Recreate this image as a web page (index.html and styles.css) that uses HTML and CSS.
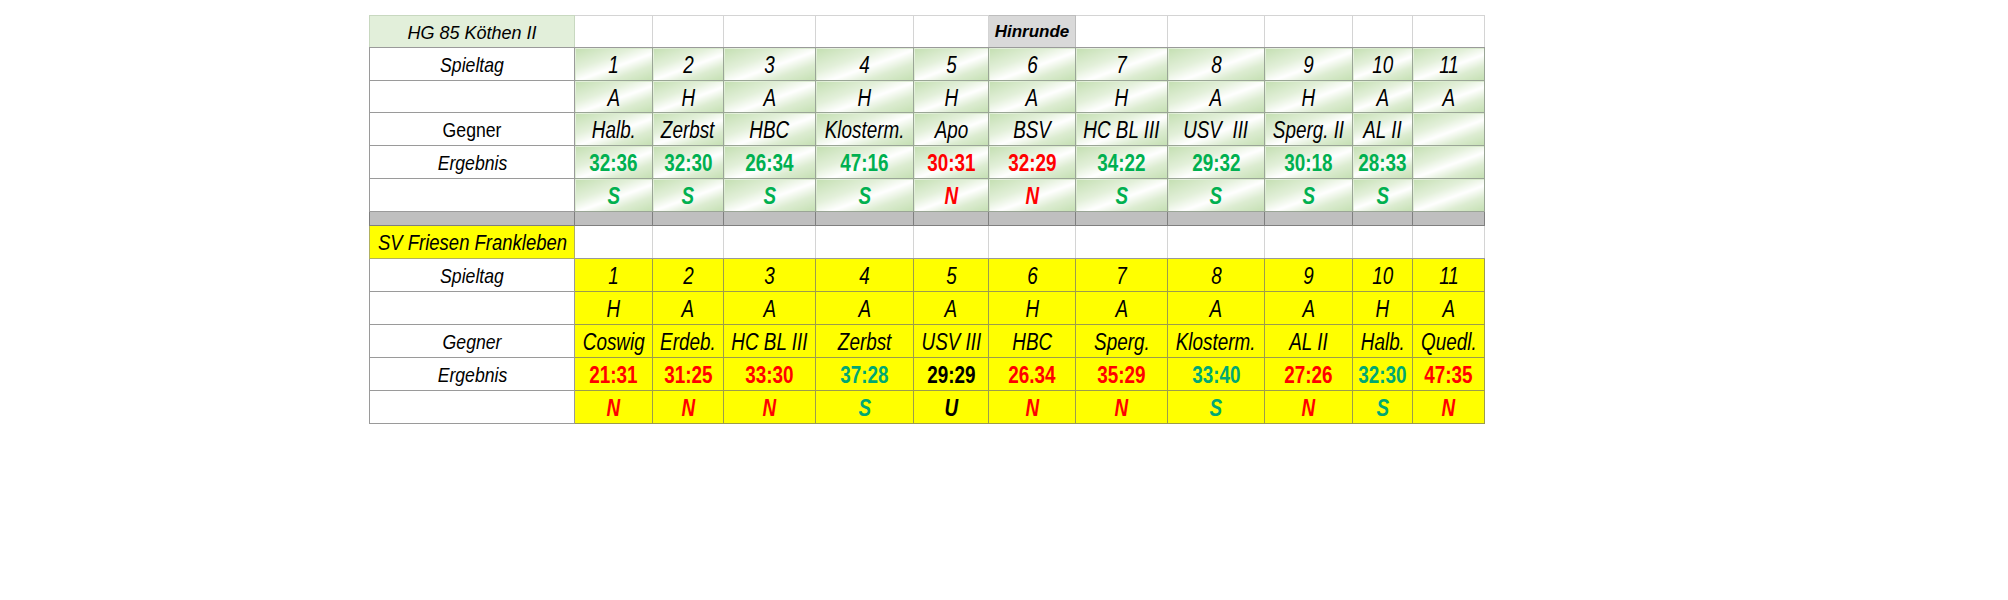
FILE: index.html
```html
<!DOCTYPE html>
<html lang="de">
<head>
<meta charset="utf-8">
<title>Spielplan</title>
<link rel="stylesheet" href="styles.css">
</head>
<body>
<table class="plan">
  <colgroup>
    <col class="c-label">
    <col class="c1"><col class="c2"><col class="c3"><col class="c4"><col class="c5"><col class="c6">
    <col class="c7"><col class="c8"><col class="c9"><col class="c10"><col class="c11">
  </colgroup>
  <tbody>
    <tr class="r-a">
      <td class="title-green"><span class="t-hg">HG 85 Köthen II</span></td>
      <td class="blank"></td><td class="blank"></td><td class="blank"></td><td class="blank"></td><td class="blank"></td>
      <td class="hinrunde"><span>Hinrunde</span></td>
      <td class="blank"></td><td class="blank"></td><td class="blank"></td><td class="blank"></td><td class="blank"></td>
    </tr>
    <tr class="r-b">
      <td class="label"><span class="sq">Spieltag</span></td>
      <td class="g"><span class="sq">1</span></td><td class="g"><span class="sq">2</span></td><td class="g"><span class="sq">3</span></td><td class="g"><span class="sq">4</span></td><td class="g"><span class="sq">5</span></td><td class="g"><span class="sq">6</span></td><td class="g"><span class="sq">7</span></td><td class="g"><span class="sq">8</span></td><td class="g"><span class="sq">9</span></td><td class="g"><span class="sq">10</span></td><td class="g"><span class="sq">11</span></td>
    </tr>
    <tr class="r-a">
      <td class="label"></td>
      <td class="g"><span class="sq">A</span></td><td class="g"><span class="sq">H</span></td><td class="g"><span class="sq">A</span></td><td class="g"><span class="sq">H</span></td><td class="g"><span class="sq">H</span></td><td class="g"><span class="sq">A</span></td><td class="g"><span class="sq">H</span></td><td class="g"><span class="sq">A</span></td><td class="g"><span class="sq">H</span></td><td class="g"><span class="sq">A</span></td><td class="g"><span class="sq">A</span></td>
    </tr>
    <tr class="r-b">
      <td class="label upright"><span class="sq">Gegner</span></td>
      <td class="g"><span class="sq">Halb.</span></td><td class="g"><span class="sq">Zerbst</span></td><td class="g"><span class="sq">HBC</span></td><td class="g"><span class="sq">Klosterm.</span></td><td class="g"><span class="sq">Apo</span></td><td class="g"><span class="sq">BSV</span></td><td class="g"><span class="sq">HC BL III</span></td><td class="g"><span class="sq">USV&nbsp; III</span></td><td class="g"><span class="sq">Sperg. II</span></td><td class="g"><span class="sq">AL II</span></td><td class="g"></td>
    </tr>
    <tr class="r-b">
      <td class="label"><span class="sq">Ergebnis</span></td>
      <td class="g res win"><span class="sq">32:36</span></td><td class="g res win"><span class="sq">32:30</span></td><td class="g res win"><span class="sq">26:34</span></td><td class="g res win"><span class="sq">47:16</span></td><td class="g res loss"><span class="sq">30:31</span></td><td class="g res loss"><span class="sq">32:29</span></td><td class="g res win"><span class="sq">34:22</span></td><td class="g res win"><span class="sq">29:32</span></td><td class="g res win"><span class="sq">30:18</span></td><td class="g res win"><span class="sq">28:33</span></td><td class="g"></td>
    </tr>
    <tr class="r-b">
      <td class="label"></td>
      <td class="g out win"><span class="sq">S</span></td><td class="g out win"><span class="sq">S</span></td><td class="g out win"><span class="sq">S</span></td><td class="g out win"><span class="sq">S</span></td><td class="g out loss"><span class="sq">N</span></td><td class="g out loss"><span class="sq">N</span></td><td class="g out win"><span class="sq">S</span></td><td class="g out win"><span class="sq">S</span></td><td class="g out win"><span class="sq">S</span></td><td class="g out win"><span class="sq">S</span></td><td class="g"></td>
    </tr>
    <tr class="r-sep">
      <td></td><td></td><td></td><td></td><td></td><td></td><td></td><td></td><td></td><td></td><td></td><td></td>
    </tr>
    <tr class="r-b">
      <td class="title-yellow"><span class="sq t-sv">SV Friesen Frankleben</span></td>
      <td class="blank"></td><td class="blank"></td><td class="blank"></td><td class="blank"></td><td class="blank"></td><td class="blank"></td>
      <td class="blank"></td><td class="blank"></td><td class="blank"></td><td class="blank"></td><td class="blank"></td>
    </tr>
    <tr class="r-b">
      <td class="label"><span class="sq">Spieltag</span></td>
      <td class="y"><span class="sq">1</span></td><td class="y"><span class="sq">2</span></td><td class="y"><span class="sq">3</span></td><td class="y"><span class="sq">4</span></td><td class="y"><span class="sq">5</span></td><td class="y"><span class="sq">6</span></td><td class="y"><span class="sq">7</span></td><td class="y"><span class="sq">8</span></td><td class="y"><span class="sq">9</span></td><td class="y"><span class="sq">10</span></td><td class="y"><span class="sq">11</span></td>
    </tr>
    <tr class="r-b">
      <td class="label"></td>
      <td class="y"><span class="sq">H</span></td><td class="y"><span class="sq">A</span></td><td class="y"><span class="sq">A</span></td><td class="y"><span class="sq">A</span></td><td class="y"><span class="sq">A</span></td><td class="y"><span class="sq">H</span></td><td class="y"><span class="sq">A</span></td><td class="y"><span class="sq">A</span></td><td class="y"><span class="sq">A</span></td><td class="y"><span class="sq">H</span></td><td class="y"><span class="sq">A</span></td>
    </tr>
    <tr class="r-b">
      <td class="label"><span class="sq">Gegner</span></td>
      <td class="y"><span class="sq">Coswig</span></td><td class="y"><span class="sq">Erdeb.</span></td><td class="y"><span class="sq">HC BL III</span></td><td class="y"><span class="sq">Zerbst</span></td><td class="y"><span class="sq">USV III</span></td><td class="y"><span class="sq">HBC</span></td><td class="y"><span class="sq">Sperg.</span></td><td class="y"><span class="sq">Klosterm.</span></td><td class="y"><span class="sq">AL II</span></td><td class="y"><span class="sq">Halb.</span></td><td class="y"><span class="sq">Quedl.</span></td>
    </tr>
    <tr class="r-b">
      <td class="label"><span class="sq">Ergebnis</span></td>
      <td class="y res loss"><span class="sq">21:31</span></td><td class="y res loss"><span class="sq">31:25</span></td><td class="y res loss"><span class="sq">33:30</span></td><td class="y res win2"><span class="sq">37:28</span></td><td class="y res draw"><span class="sq">29:29</span></td><td class="y res loss"><span class="sq">26.34</span></td><td class="y res loss"><span class="sq">35:29</span></td><td class="y res win2"><span class="sq">33:40</span></td><td class="y res loss"><span class="sq">27:26</span></td><td class="y res win2"><span class="sq">32:30</span></td><td class="y res loss"><span class="sq">47:35</span></td>
    </tr>
    <tr class="r-b">
      <td class="label"></td>
      <td class="y out loss"><span class="sq">N</span></td><td class="y out loss"><span class="sq">N</span></td><td class="y out loss"><span class="sq">N</span></td><td class="y out win2"><span class="sq">S</span></td><td class="y out draw"><span class="sq">U</span></td><td class="y out loss"><span class="sq">N</span></td><td class="y out loss"><span class="sq">N</span></td><td class="y out win2"><span class="sq">S</span></td><td class="y out loss"><span class="sq">N</span></td><td class="y out win2"><span class="sq">S</span></td><td class="y out loss"><span class="sq">N</span></td>
    </tr>
  </tbody>
</table>
</body>
</html>
```

FILE: styles.css
```css
html, body {
  margin: 0;
  padding: 0;
  background: #ffffff;
}

body {
  padding: 15px 0 0 369px;
  font-family: "Liberation Sans", Arial, sans-serif;
  color: #000;
}

.plan {
  border-collapse: collapse;
  table-layout: fixed;
  width: 1115px;
}

.c-label { width: 205px; }
.c1 { width: 78px; }
.c2 { width: 71px; }
.c3 { width: 92px; }
.c4 { width: 98px; }
.c5 { width: 75px; }
.c6 { width: 87px; }
.c7 { width: 92px; }
.c8 { width: 97px; }
.c9 { width: 88px; }
.c10 { width: 60px; }
.c11 { width: 72px; }

.plan td {
  padding: 0;
  border: 1px solid #9a9a9a;
  text-align: center;
  vertical-align: middle;
  font-style: italic;
  font-size: 23px;
  line-height: 24px;
  white-space: nowrap;
  overflow: visible;
}

.r-a td { height: 31px; }
.r-b td { height: 32px; }
.r-sep td {
  height: 13px;
  background: #bfbfbf;
  border-color: #7f7f7f;
}

.sq {
  display: inline-block;
  transform: scaleX(0.82);
  transform-origin: center;
  padding-top: 2px;
  margin: 0 -20px;
}

.label {
  background: #ffffff;
  font-size: 21px !important;
}
.label .sq { transform: scaleX(0.84); }
.label.upright { font-style: normal !important; }

.blank {
  background: #ffffff;
  border-color: #d4d4d4 !important;
  border-bottom-color: #9a9a9a !important;
}

.title-green {
  background: #e2efda;
  border-color: #c8d8c0 !important;
  border-bottom-color: #9a9a9a !important;
}
.t-hg {
  font-size: 18px;
}

.title-yellow {
  background: #ffff00;
  border-color: #b0b060 !important;
}
.title-yellow .t-sv {
  font-size: 22px;
  transform: scaleX(0.84);
}

.hinrunde {
  background: #d9d9d9;
  font-weight: bold;
  font-size: 17px !important;
  vertical-align: bottom !important;
  border-color: #bdbdbd !important;
  border-bottom-color: #9a9a9a !important;
}
.hinrunde span {
  display: inline-block;
  padding-bottom: 3px;
}

.g {
  background: linear-gradient(160deg, #c4dfb2 0%, #e3f0da 35%, #ffffff 55%, #dcecd1 75%, #c4dfb2 100%);
  border-color: #9aa596 !important;
}

.y {
  background: #ffff00;
  border-color: #9c9c4c !important;
}

.res { font-weight: bold; font-style: normal !important; }
.out { font-weight: bold; }

.win { color: #00b050; }
.win2 { color: #00a873; }
.loss { color: #ff0000; }
.draw { color: #000000; }
```
